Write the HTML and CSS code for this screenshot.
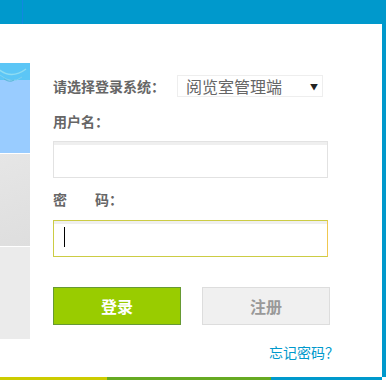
FILE: index.html
```html
<!DOCTYPE html>
<html lang="zh-CN">
<head>
    <meta charset="UTF-8">
    <meta name="viewport" content="width=device-width, initial-scale=1.0">
    <title>登录</title>
    <link rel="stylesheet" href="styles.css">
</head>
<body>
    <div class="header"><span class="header-line"></span></div>

    <div class="main">
        <div class="side">
            <div class="side-pic">
                <svg width="30" height="90" viewBox="0 0 30 90">
                    <path d="M-4 4 Q10 18 26 6" stroke="#8fdcf2" stroke-width="1.5" fill="none"/>
                    <path d="M0 12 Q12 22 22 14" stroke="#7fd0ee" stroke-width="1" fill="none"/>
                    <path d="M4 16 Q10 20 14 17" stroke="#5ab8d8" stroke-width="1" fill="none"/>
                </svg>
            </div>
            <div class="side-mid"></div>
            <div class="side-low"></div>
        </div>

        <form class="login">
            <div class="row">
                <label class="lbl">请选择登录系统：</label>
                <div class="select">
                    <span>阅览室管理端</span>
                    <span class="arrow">▼</span>
                </div>
            </div>

            <div class="lbl field-lbl">用户名：</div>
            <div class="input"></div>

            <div class="lbl field-lbl">密&emsp;&emsp;码：</div>
            <div class="input focus"><span class="caret"></span></div>

            <div class="buttons">
                <button type="button" class="btn btn-login">登录</button>
                <button type="button" class="btn btn-reg">注册</button>
            </div>

            <div class="forgot"><a href="#">忘记密码？</a></div>
        </form>
    </div>

    <div class="footer">
        <span class="f-yellow"></span>
        <span class="f-green"></span>
        <span class="f-blue"></span>
    </div>
</body>
</html>
```

FILE: styles.css
```css
body {
    margin: 0;
    width: 386px;
    height: 380px;
    background: #fff;
    font-family: "Noto Sans CJK SC", "DejaVu Sans", sans-serif;
    overflow: hidden;
}
.header {
    height: 24px;
    background: #0099cc;
    position: relative;
}
.header-line {
    position: absolute;
    left: 22px;
    top: 0;
    width: 1px;
    height: 24px;
    background: #1188e0;
}
.main {
    display: flex;
    height: 353px;
    border-right: 4px solid #0099cc;
}
.side {
    width: 30px;
    margin-top: 39px;
    display: flex;
    flex-direction: column;
    gap: 1px;
}
.side-pic {
    height: 90px;
    background: linear-gradient(#5cc6f6 0, #5cc6f6 17px, #99ccff 17px);
}
.side-pic svg { display: block; }
.side-mid {
    height: 92px;
    background: linear-gradient(160deg, #e6e6e6, #dedede);
}
.side-low {
    height: 92px;
    background: #ebebeb;
}
.login {
    padding: 51px 0 0 23px;
    width: 286px;
}
.row {
    display: flex;
    align-items: center;
    height: 22px;
}
.lbl {
    font-size: 14px;
    font-weight: bold;
    color: #666;
    line-height: 20px;
}
.select {
    margin-left: 12px;
    height: 20px;
    border: 1px solid #eee;
    display: flex;
    align-items: center;
    justify-content: space-between;
    padding: 0 4px 0 8px;
    width: 132px;
    font-size: 16px;
    color: #666;
}
.arrow {
    font-size: 8px;
    color: #222;
}
.field-lbl {
    margin-top: 14px;
}
.input {
    margin-top: 10px;
    width: 273px;
    height: 35px;
    border: 1px solid #e2e2e2;
    box-shadow: inset 0 3px 0 #efefef;
    position: relative;
}
.field-lbl + .input.focus { margin-top: 11px; }
.input + .field-lbl { margin-top: 11px; }
.input.focus {
    border-color: #cccc44;
    border-right-color: #f0c850;
}
.caret {
    position: absolute;
    left: 10px;
    top: 6px;
    width: 1px;
    height: 20px;
    background: #000;
}
.buttons {
    margin-top: 30px;
    display: flex;
    gap: 21px;
}
.btn {
    width: 128px;
    height: 38px;
    font-family: inherit;
    font-size: 16px;
    font-weight: bold;
    padding: 0;
}
.btn-login {
    background: #99cc00;
    border: 1px solid #669933;
    color: #fff;
}
.btn-reg {
    background: #f0f0f0;
    border: 1px solid #ddd;
    color: #999;
}
.forgot {
    margin-top: 16px;
    text-align: right;
    line-height: 20px;
}
.forgot a {
    color: #0099cc;
    font-size: 14px;
    text-decoration: none;
}
.footer {
    display: flex;
    height: 3px;
    margin-right: 4px;
}
.f-yellow { width: 107px; background: #cccc00; }
.f-green { width: 164px; background: #66aa22; }
.f-blue { flex: 1; background: #0099cc; }
```
